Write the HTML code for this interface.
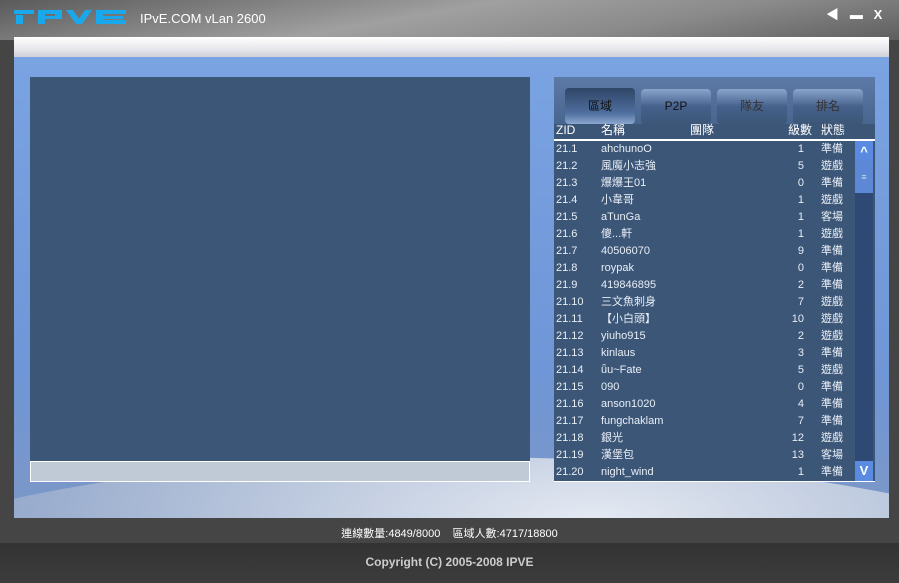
<html style="overflow:hidden"><head><style>
html,body{margin:0;width:899px;height:583px;overflow:hidden}
body{background:#454545;font-family:"Liberation Sans","Noto Sans CJK TC",sans-serif;position:relative}
.a{position:absolute}
.row{position:absolute;left:0;width:300px;height:17px;font-size:11px;color:#e8eef6;line-height:17px}
.row span{position:absolute}
.tab{position:absolute;top:89px;width:70px;height:35px;background:linear-gradient(180deg,#8aa4cc,#46628c 50%,#3c5677);border-radius:4px;font-size:12px;color:#222;text-align:center;line-height:34px}
</style></head><body>
<div class="a" style="left:0;top:0;width:899px;height:40px;background:linear-gradient(170deg,#5a5a5a 0%,#a0a0a0 45%,#8a8a8a 70%,#5e5e5e 100%)"></div>
<svg class="a" style="left:14px;top:8px" width="114" height="18" viewBox="0 0 114 18">
<g fill="#1aa8ec">
<rect x="0" y="2" width="20" height="4"/><rect x="2" y="7" width="7" height="9"/>
<path d="M24 2h24v9h-17v5h-7zM31 6v2h10v-2z"/>
<path d="M52 2h7l6 9 6-9h7l-10 14h-6z"/>
<path d="M82 2h30v4h-23v2h20v3h-20v1h23v4h-30z"/>
</g></svg>
<div class="a" style="left:140px;top:11px;color:#fff;font-size:13px">IPvE.COM vLan 2600</div>
<div class="a" style="left:826px;top:4px;width:70px;color:#fff;font-size:13px;font-weight:bold;white-space:nowrap">◀&nbsp;&nbsp; ▬&nbsp;&nbsp; X</div>
<div class="a" style="left:14px;top:37px;width:875px;height:481px;overflow:hidden;background:linear-gradient(180deg,#7ba4e3 0%,#6f96d6 70%,#7d97c6 100%)">
<div class="a" style="left:-200px;top:420px;width:1300px;height:300px;border-radius:50%;background:radial-gradient(ellipse at 60% 20%,#e4e9f2 0%,#b9c6dc 30%,#8ca2c8 60%,#7d97c6 100%)"></div>
</div>
<div class="a" style="left:14px;top:37px;width:875px;height:20px;background:linear-gradient(180deg,#fff,#e6e6ec 60%,#cfd0d8)"></div>
<div class="a" style="left:30px;top:77px;width:500px;height:384px;background:#3c5677"></div>
<div class="a" style="left:30px;top:461px;width:498px;height:19px;background:#c0c9d6;border:1px solid #fff"></div>
<div class="a" style="left:554px;top:77px;width:321px;height:404px;background:#3c5677;border-bottom:1px solid #fff"></div>
<div class="a" style="left:554px;top:77px;width:321px;height:47px;background:linear-gradient(180deg,#5c7aa6,#48658e)"></div>
<div class="a" style="left:565px;top:88px;width:70px;height:36px;background:linear-gradient(180deg,#2e4566,#4f6f9f 70%,#8ca6cf);border-radius:4px;font-size:12px;color:#111;text-align:center;line-height:36px">區域</div>
<div class="tab" style="left:641px;color:#111">P2P</div>
<div class="tab" style="left:717px;color:#333">隊友</div>
<div class="tab" style="left:793px;color:#333">排名</div>
<div class="row" style="left:554px;top:122px;color:#fff;font-size:12px"><span style="left:2px">ZID</span><span style="left:47px">名稱</span><span style="left:136px">團隊</span><span style="left:234px">級數</span><span style="left:267px">狀態</span></div>
<div class="a" style="left:554px;top:139px;width:321px;height:2px;background:#fff"></div>
<div class="a" style="left:855px;top:141px;width:18px;height:340px;background:#2e4a74"></div>
<div class="a" style="left:855px;top:141px;width:18px;height:20px;background:#5a8be0;color:#fff;font-weight:bold;text-align:center;font-size:13px;line-height:22px">^</div>
<div class="a" style="left:855px;top:161px;width:18px;height:32px;background:#5c88d6;color:#cde;text-align:center;font-size:9px;line-height:32px">≡</div>
<div class="a" style="left:855px;top:461px;width:18px;height:20px;background:#5a8be0;color:#fff;font-weight:bold;text-align:center;font-size:13px;line-height:20px">V</div>
<div class="a" style="left:554px;top:141px;width:300px;height:340px;overflow:hidden">
<div class="row" style="top:0"><span style="left:2px">21.1</span><span style="left:47px">ahchunoO</span><span style="right:50px">1</span><span style="left:267px">準備</span></div>
<div class="row" style="top:17px"><span style="left:2px">21.2</span><span style="left:47px">風魔小志強</span><span style="right:50px">5</span><span style="left:267px">遊戲</span></div>
<div class="row" style="top:34px"><span style="left:2px">21.3</span><span style="left:47px">爆爆王01</span><span style="right:50px">0</span><span style="left:267px">準備</span></div>
<div class="row" style="top:51px"><span style="left:2px">21.4</span><span style="left:47px">小韋哥</span><span style="right:50px">1</span><span style="left:267px">遊戲</span></div>
<div class="row" style="top:68px"><span style="left:2px">21.5</span><span style="left:47px">aTunGa</span><span style="right:50px">1</span><span style="left:267px">客場</span></div>
<div class="row" style="top:85px"><span style="left:2px">21.6</span><span style="left:47px">傻...軒</span><span style="right:50px">1</span><span style="left:267px">遊戲</span></div>
<div class="row" style="top:102px"><span style="left:2px">21.7</span><span style="left:47px">40506070</span><span style="right:50px">9</span><span style="left:267px">準備</span></div>
<div class="row" style="top:119px"><span style="left:2px">21.8</span><span style="left:47px">roypak</span><span style="right:50px">0</span><span style="left:267px">準備</span></div>
<div class="row" style="top:136px"><span style="left:2px">21.9</span><span style="left:47px">419846895</span><span style="right:50px">2</span><span style="left:267px">準備</span></div>
<div class="row" style="top:153px"><span style="left:2px">21.10</span><span style="left:47px">三文魚刺身</span><span style="right:50px">7</span><span style="left:267px">遊戲</span></div>
<div class="row" style="top:170px"><span style="left:2px">21.11</span><span style="left:47px">【小白頭】</span><span style="right:50px">10</span><span style="left:267px">遊戲</span></div>
<div class="row" style="top:187px"><span style="left:2px">21.12</span><span style="left:47px">yiuho915</span><span style="right:50px">2</span><span style="left:267px">遊戲</span></div>
<div class="row" style="top:204px"><span style="left:2px">21.13</span><span style="left:47px">kinlaus</span><span style="right:50px">3</span><span style="left:267px">準備</span></div>
<div class="row" style="top:221px"><span style="left:2px">21.14</span><span style="left:47px">ǖu~Fate</span><span style="right:50px">5</span><span style="left:267px">遊戲</span></div>
<div class="row" style="top:238px"><span style="left:2px">21.15</span><span style="left:47px">090</span><span style="right:50px">0</span><span style="left:267px">準備</span></div>
<div class="row" style="top:255px"><span style="left:2px">21.16</span><span style="left:47px">anson1020</span><span style="right:50px">4</span><span style="left:267px">準備</span></div>
<div class="row" style="top:272px"><span style="left:2px">21.17</span><span style="left:47px">fungchaklam</span><span style="right:50px">7</span><span style="left:267px">準備</span></div>
<div class="row" style="top:289px"><span style="left:2px">21.18</span><span style="left:47px">銀光</span><span style="right:50px">12</span><span style="left:267px">遊戲</span></div>
<div class="row" style="top:306px"><span style="left:2px">21.19</span><span style="left:47px">漢堡包</span><span style="right:50px">13</span><span style="left:267px">客場</span></div>
<div class="row" style="top:323px"><span style="left:2px">21.20</span><span style="left:47px">night_wind</span><span style="right:50px">1</span><span style="left:267px">準備</span></div>
</div>
<div class="a" style="left:0;top:518px;width:899px;height:25px;background:#454545"></div>
<div class="a" style="left:0;top:525px;width:899px;text-align:center;color:#fff;font-size:11px">連線數量:4849/8000&nbsp;&nbsp;&nbsp; 區域人數:4717/18800</div>
<div class="a" style="left:0;top:543px;width:899px;height:40px;background:linear-gradient(180deg,#333,#3c3c3c)"></div>
<div class="a" style="left:0;top:555px;width:899px;text-align:center;color:#ccc;font-size:12px;font-weight:bold">Copyright (C) 2005-2008 IPVE</div>
</body></html>
